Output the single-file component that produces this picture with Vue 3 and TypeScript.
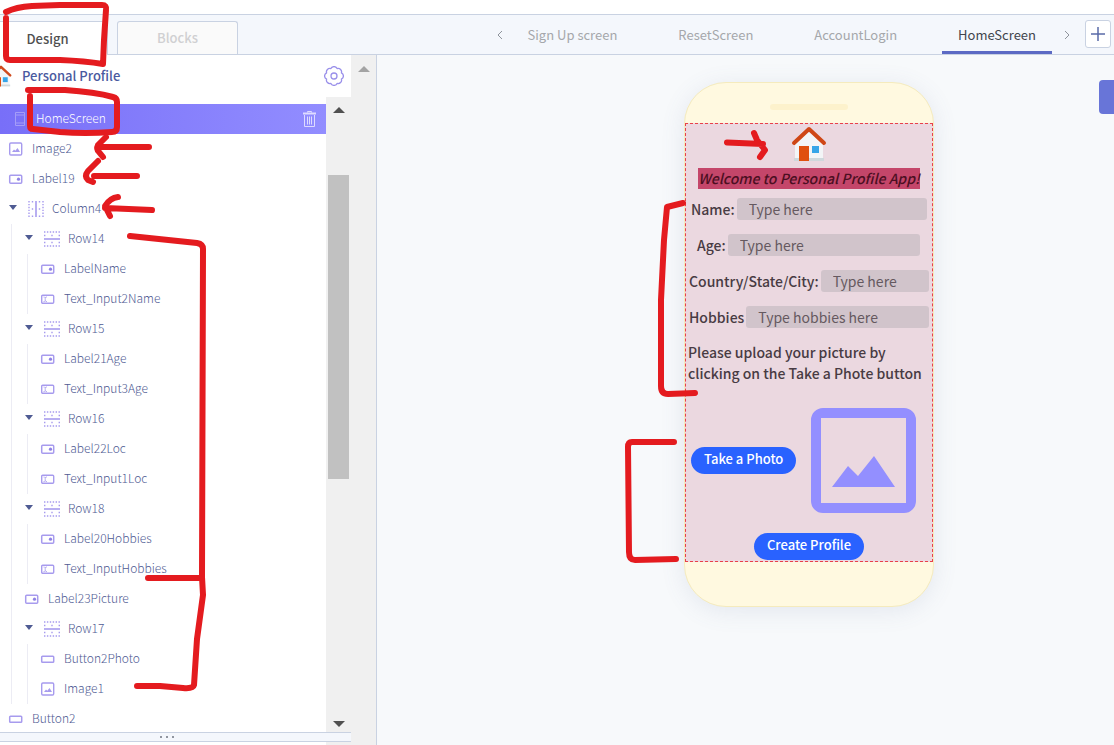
<script setup lang="ts">
import { ref } from 'vue'

type Kind = 'image' | 'label' | 'column' | 'row' | 'input' | 'button'

interface TreeNode {
  name: string
  kind: Kind
  depth: number
}

interface Field {
  id: string
  label: string
  hint: string
  inset: 'tight' | 'mid' | 'wide'
}

const nodes: TreeNode[] = [
  { name: 'Image2', kind: 'image', depth: 0 },
  { name: 'Label19', kind: 'label', depth: 0 },
  { name: 'Column4', kind: 'column', depth: 0 },
  { name: 'Row14', kind: 'row', depth: 1 },
  { name: 'LabelName', kind: 'label', depth: 2 },
  { name: 'Text_Input2Name', kind: 'input', depth: 2 },
  { name: 'Row15', kind: 'row', depth: 1 },
  { name: 'Label21Age', kind: 'label', depth: 2 },
  { name: 'Text_Input3Age', kind: 'input', depth: 2 },
  { name: 'Row16', kind: 'row', depth: 1 },
  { name: 'Label22Loc', kind: 'label', depth: 2 },
  { name: 'Text_Input1Loc', kind: 'input', depth: 2 },
  { name: 'Row18', kind: 'row', depth: 1 },
  { name: 'Label20Hobbies', kind: 'label', depth: 2 },
  { name: 'Text_InputHobbies', kind: 'input', depth: 2 },
  { name: 'Label23Picture', kind: 'label', depth: 1 },
  { name: 'Row17', kind: 'row', depth: 1 },
  { name: 'Button2Photo', kind: 'button', depth: 2 },
  { name: 'Image1', kind: 'image', depth: 2 },
  { name: 'Button2', kind: 'button', depth: 0 },
]

const screens = ['Sign Up screen', 'ResetScreen', 'AccountLogin', 'HomeScreen']
const current = ref('HomeScreen')

const fields: Field[] = [
  { id: 'name', label: 'Name:', hint: 'Type here', inset: 'mid' },
  { id: 'age', label: 'Age:', hint: 'Type here', inset: 'wide' },
  { id: 'place', label: 'Country/State/City:', hint: 'Type here', inset: 'tight' },
  { id: 'hobbies', label: 'Hobbies', hint: 'Type hobbies here', inset: 'tight' },
]

const isContainer = (kind: Kind) => kind === 'column' || kind === 'row'
</script>

<template>
  <div class="page">
    <header class="topbar">
      <div class="modes">
        <button class="mode on" type="button">Design</button>
        <button class="mode" type="button">Blocks</button>
      </div>
      <nav class="screens">
        <button class="chev" type="button" aria-label="Previous">
          <svg width="8" height="10" viewBox="0 0 8 10"><path d="M6 1 2 5l4 4" fill="none" stroke="#8f949c" /></svg>
        </button>
        <div class="tabs">
          <button
            v-for="s in screens"
            :key="s"
            type="button"
            class="tab"
            :class="{ on: s === current }"
            @click="current = s"
          >{{ s }}</button>
        </div>
        <button class="chev" type="button" aria-label="Next">
          <svg width="8" height="10" viewBox="0 0 8 10"><path d="m2 1 4 4-4 4" fill="none" stroke="#8f949c" /></svg>
        </button>
        <button class="plus" type="button" aria-label="Add screen">
          <svg width="14" height="14" viewBox="0 0 14 14"><path d="M7 0v14M0 7h14" stroke="#5a6ba8" stroke-width="1.5" /></svg>
        </button>
      </nav>
    </header>

    <div class="body">
      <aside class="side">
        <div class="panel">
          <div class="project">
            <svg class="home-small" viewBox="0 0 36 36">
              <path d="M4 16 18 4l14 12v18H4z" fill="#f3f5f7" />
              <path d="M3 32h30v3H3z" fill="#cfd8dc" />
              <path d="M8 20h10v15H8z" fill="#e0500f" />
              <path d="M21 20h8v8h-8z" fill="#36a5e8" />
              <path d="M3 17 18 3l15 14" fill="none" stroke="#cf4a1d" stroke-width="4" stroke-linecap="round" stroke-linejoin="round" />
            </svg>
            <span class="project-name">Personal Profile</span>
            <button class="gear" type="button" aria-label="Settings">
              <svg width="20" height="20" viewBox="0 0 20 20" fill="none" stroke="#9a90ea" stroke-width="1.3" stroke-linejoin="round">
                <path d="M6.900 2.600A3.400 3.400 0 0 1 13.100 2.600A3.400 3.400 0 0 1 17.400 6.900A3.400 3.400 0 0 1 17.400 13.100A3.400 3.400 0 0 1 13.100 17.400A3.400 3.400 0 0 1 6.900 17.400A3.400 3.400 0 0 1 2.600 13.100A3.400 3.400 0 0 1 2.600 6.900A3.400 3.400 0 0 1 6.900 2.600z" />
                <circle cx="10" cy="10" r="3" />
              </svg>
            </button>
          </div>

          <div class="tree-area">
            <ul class="tree">
              <li class="node selected">
                <svg class="phone-icon" width="10" height="14" viewBox="0 0 10 14" fill="none" stroke="#a59df8">
                  <path d="M.5.5h9v13h-9zM.5 3h9M.5 11h9" />
                </svg>
                <span>HomeScreen</span>
                <button class="trash" type="button" aria-label="Delete">
                  <svg width="13" height="16" viewBox="0 0 13 16" fill="none" stroke="#dedbff">
                    <path d="M4.500 1.500V.5h4v1M1.500 4v11.500h10V4M4.500 5.500v8M6.500 5.500v8M8.500 5.500v8" />
                    <path d="M0 2.500h13" stroke-width="2" />
                  </svg>
                </button>
              </li>
              <li v-for="n in nodes" :key="n.name" class="node" :class="'d' + n.depth">
                <svg v-if="isContainer(n.kind)" class="twist" width="8" height="5" viewBox="0 0 8 5">
                  <path d="M0 0h8L4 5z" fill="#4f5b93" />
                </svg>
                <svg class="icon" width="16" height="16" viewBox="0 0 16 16" fill="none" stroke="#a79bee">
                  <template v-if="n.kind === 'image'">
                    <rect x="1.700" y="2" width="12" height="12" rx="1.200" stroke-width="1.400" />
                    <path d="m4 11 2-2.500 1.300 1.200L9.500 7l2.500 4z" fill="#a79bee" stroke="none" />
                  </template>
                  <template v-else-if="n.kind === 'label'">
                    <rect x="1.700" y="4.200" width="12" height="8" rx="1" stroke-width="1.500" />
                    <circle cx="10.500" cy="8.200" r="1.600" fill="#8f82e4" stroke="none" />
                  </template>
                  <template v-else-if="n.kind === 'input'">
                    <rect x="1.700" y="4.200" width="12" height="8" rx="1" stroke-width="1.400" />
                    <path d="M3.500 6h1l.7.7L6 6h1M5.200 6.500v3.500M3.500 10.500h1l.7-.7.800.7h1" stroke-width=".8" />
                  </template>
                  <template v-else-if="n.kind === 'button'">
                    <rect x="1.700" y="5.200" width="12" height="6" rx=".8" stroke-width="1.500" />
                  </template>
                  <template v-else-if="n.kind === 'row'">
                    <path d="M0 1h16M0 15h16" stroke-width="1.400" stroke-dasharray="1.400 1.500" />
                    <path d="M0 4.500h16M0 11.500h16" stroke-width="1.400" stroke-dasharray="1.400 5.900" />
                    <path d="M0 8h16" stroke-width="1.600" />
                  </template>
                  <template v-else>
                    <path d="M1 0v16M15 0v16" stroke-width="1.400" stroke-dasharray="1.400 1.500" />
                    <path d="M4.500 0v16M11.500 0v16" stroke-width="1.400" stroke-dasharray="1.400 5.900" />
                    <path d="M8 0v16" stroke-width="1.600" />
                  </template>
                </svg>
                <span>{{ n.name }}</span>
              </li>
            </ul>
            <div class="scroll">
              <svg width="12" height="6" viewBox="0 0 12 6"><path d="M0 6h12L6 0z" fill="#505050" /></svg>
              <div class="thumb"></div>
              <svg width="12" height="6" viewBox="0 0 12 6"><path d="M0 0h12L6 6z" fill="#505050" /></svg>
            </div>
          </div>

          <div class="splitter"><i></i><i></i><i></i></div>
          <div class="below"><div class="below-scroll"></div></div>
        </div>
        <div class="outer-scroll">
          <svg width="12" height="6" viewBox="0 0 12 6"><path d="M0 6h12L6 0z" fill="#a3a3a3" /></svg>
        </div>
      </aside>

      <main class="canvas">
        <div class="phone">
          <div class="speaker"></div>
          <section class="screen">
            <svg class="home-big" viewBox="0 0 36 36">
              <path d="M4 16 18 4l14 12v18H4z" fill="#f3f5f7" />
              <path d="M3 32h30v3H3z" fill="#cfd8dc" />
              <path d="M8 20h10v15H8z" fill="#e0500f" />
              <path d="M21 20h7v7h-7z" fill="#36a5e8" />
              <path d="M3 17 18 3l15 14" fill="none" stroke="#cf4716" stroke-width="4" stroke-linecap="round" stroke-linejoin="round" />
            </svg>
            <h1 class="welcome">Welcome to Personal Profile App!</h1>
            <div v-for="f in fields" :key="f.id" class="field" :class="f.inset">
              <label :for="f.id">{{ f.label }}</label>
              <input :id="f.id" type="text" :placeholder="f.hint" />
            </div>
            <p class="note">Please upload your picture by clicking on the Take a Phote button</p>
            <div class="photo">
              <button class="pill" type="button">Take a Photo</button>
              <svg class="picture" viewBox="0 0 105 105">
                <rect x="5" y="5" width="95" height="95" rx="7" fill="none" stroke="#938fff" stroke-width="10" />
                <path d="M10 10h85v85H10z" fill="#ebd8e0" />
                <path d="m21 79 16-21 10 10 16-20 21 31z" fill="#938fff" />
              </svg>
            </div>
            <button class="pill create" type="button">Create Profile</button>
          </section>
        </div>
        <button class="drawer" type="button" aria-label="Open panel"></button>
      </main>
    </div>

    <svg class="marks" width="1114" height="745" viewBox="0 0 1114 745" aria-hidden="true">
      <path d="M6 12Q16 7 32 6L60 5L102 5Q107 5 106 10L104 40 103 64Q85 61 60 60L10 60Q6 60 6 56V18" />
      <path d="M28 90H65Q95 92 113 97Q117 98 117 102V127Q117 132 112 132Q85 134 60 132L33 129Q30 129 30 126V96" />
      <path d="M100 147H149M106 137 98 145Q96 149 99 152L103 157" />
      <path d="M94 176H137M98 161 88 171Q84 176 88 180L93 182" />
      <path d="M105 208 152 210M118 197Q110 198 105 206L110 216" />
      <path d="M130 236 197 243Q203 244 203 249L202 577 203 595 197 639 194 685Q193 689 183 688L160 686H137M148 578H202" />
      <path d="M727 142.500 763 144M754 133 757 140 765 150 760 157" />
      <path d="M683 203 667 207 664 240 661 300 661 386Q661 394 668 394L695 393" />
      <path d="M674 442H632Q628 442 628 447L629 552Q629 560 635 560L676 559" />
    </svg>
  </div>
</template>

<style>
body {
  margin: 0;
}
</style>

<style scoped>
.page {
  position: relative;
  display: flex;
  flex-direction: column;
  height: 100vh;
  box-sizing: border-box;
  padding-top: 14px;
  overflow: hidden;
  background: #fff;
  font-family: "Noto Sans CJK SC", "Noto Sans", sans-serif;
  font-size: 13px;
  line-height: 20px;
  color: #4f5b93;
}
button {
  margin: 0;
  padding: 0;
  border: 0;
  background: none;
  font: inherit;
  color: inherit;
}
svg {
  display: block;
  flex: none;
}
.topbar {
  display: flex;
  justify-content: space-between;
  height: 39px;
  flex: none;
  border-top: 1px solid #c9d2e2;
  border-bottom: 1px solid #c9d2e2;
  background: #f4f7fc;
}
.modes {
  display: flex;
  gap: 9px;
  margin-left: -13px;
  padding-top: 6px;
}
.mode {
  box-sizing: border-box;
  width: 121px;
  border: 1px solid #c9d2e2;
  border-bottom: 0;
  border-radius: 3px 3px 0 0;
  background: #fafafa;
  color: #d0d0d2;
  font-weight: 500;
}
.mode.on {
  margin-bottom: -1px;
  background: #fff;
  color: #505050;
}
.screens {
  display: flex;
  align-items: center;
  padding-right: 3px;
}
.tabs {
  display: flex;
  gap: 29px;
  height: 100%;
  margin: 0 11px 0 8px;
}
.tab {
  padding: 3px 16px 0;
  border-bottom: 3px solid transparent;
  color: #a5a7ab;
}
.tab.on {
  border-color: #5c6ac4;
  color: #40444c;
}
.plus {
  display: flex;
  align-items: center;
  justify-content: center;
  box-sizing: border-box;
  width: 26px;
  height: 28px;
  margin: 0 0 2px 14px;
  border: 1px solid #c9d2e2;
  border-radius: 3px;
  background: #fff;
}
.body {
  display: flex;
  flex: 1;
  min-height: 0;
}
.side {
  display: flex;
  width: 376px;
  flex: none;
  border-right: 1px solid #c9d2e2;
}
.panel {
  display: flex;
  flex: 1;
  flex-direction: column;
  min-width: 0;
}
.project {
  display: flex;
  align-items: center;
  height: 42px;
  flex: none;
  padding-right: 7px;
}
.home-small {
  width: 22px;
  margin-left: -10px;
}
.project-name {
  margin-left: 10px;
  font-weight: 500;
  color: #4a5aa0;
}
.gear {
  margin-left: auto;
}
.tree-area {
  display: flex;
  flex: 1;
  min-height: 0;
}
.tree {
  flex: 1;
  margin: 0;
  padding: 7px 0 0;
  list-style: none;
  font-size: 12px;
  font-weight: 300;
}
.node {
  display: flex;
  align-items: center;
  height: 30px;
  padding-left: 8px;
}
.node span {
  padding-bottom: 2px;
}
.d1 {
  padding-left: 24px;
  background: linear-gradient(#ececf4, #ececf4) 11px 0 / 1px 100% no-repeat;
}
.d2 {
  padding-left: 40px;
  background:
    linear-gradient(#ececf4, #ececf4) 11px 0 / 1px 100% no-repeat,
    linear-gradient(#ececf4, #ececf4) 27px 0 / 1px 100% no-repeat;
}
.selected {
  padding: 0 10px 0 15px;
  background: linear-gradient(90deg, #786ff8, #928dff);
  color: #fff;
}
.phone-icon {
  margin-right: 11px;
}
.trash {
  margin-left: auto;
}
.twist {
  margin: 0 11px 3px 1px;
}
.icon {
  margin-right: 8px;
}
.scroll {
  display: flex;
  flex-direction: column;
  align-items: center;
  box-sizing: border-box;
  width: 25px;
  padding: 10px 0 5px;
  background: #f0f0f0;
}
.thumb {
  width: 21px;
  height: 49%;
  margin: 62px 0 auto;
  background: #c1c1c1;
}
.splitter {
  display: flex;
  justify-content: center;
  align-items: center;
  gap: 4px;
  height: 8px;
  flex: none;
  border-top: 1px solid #c9d2e2;
  border-bottom: 1px solid #c9d2e2;
  background: #f4f7fc;
  padding-right: 18px;
}
.splitter i {
  width: 2px;
  height: 2px;
  border-radius: 1px;
  background: #6f7480;
}
.below {
  display: flex;
  justify-content: flex-end;
  height: 3px;
}
.below-scroll {
  width: 25px;
  background: #f0f0f0;
}
.outer-scroll {
  display: flex;
  justify-content: center;
  width: 25px;
  padding-top: 11px;
  background: #f0f0f0;
}
.canvas {
  position: relative;
  display: flex;
  flex: 1;
  justify-content: center;
  align-items: flex-start;
  padding: 27px 0 0 127px;
  background: #f7f9fb;
}
.phone {
  box-sizing: border-box;
  width: 250px;
  padding-bottom: 44px;
  border: 1px solid #f5ebbd;
  border-radius: 42px;
  background: #fff9e0;
  box-shadow: 0 4px 24px rgba(90, 110, 150, 0.12);
}
.speaker {
  width: 78px;
  height: 6px;
  margin: 21px auto 13px;
  border-radius: 3px;
  background: #fdf2cc;
}
.screen {
  display: flex;
  flex-direction: column;
  align-items: center;
  border: 1px dashed #e8404a;
  background: #ebd8e0;
  color: #54474f;
}
.home-big {
  width: 36px;
  margin-top: 2px;
}
.welcome {
  margin: 6px 0 9px;
  background: #c4466a;
  color: #4c0f22;
  font-size: 14px;
  line-height: 21px;
  font-style: italic;
  font-weight: 500;
  white-space: nowrap;
}
.field {
  display: flex;
  align-items: center;
  gap: 2px;
  align-self: stretch;
  height: 22px;
  margin-bottom: 14px;
  font-size: 14px;
}
.tight {
  padding: 0 3px;
}
.mid {
  padding: 0 5px;
}
.wide {
  padding: 0 12px 0 11px;
}
.field label {
  padding-bottom: 1px;
  color: #483b43;
  font-weight: 500;
  white-space: nowrap;
}
.field input {
  flex: 1;
  min-width: 0;
  height: 22px;
  box-sizing: border-box;
  padding: 0 12px 1px;
  border: 0;
  border-radius: 3px;
  background: #d1c4cb;
  font: inherit;
  color: inherit;
}
.field input::placeholder {
  color: #65595f;
  opacity: 1;
}
.note {
  align-self: stretch;
  margin: 0 0 24px;
  padding: 0 2px;
  color: #483b43;
  font-size: 14px;
  line-height: 21px;
  font-weight: 500;
}
.photo {
  display: flex;
  align-items: center;
  align-self: stretch;
  justify-content: space-between;
  padding: 0 16px 0 5px;
}
.picture {
  width: 105px;
}
.pill {
  height: 27px;
  padding: 0 13px 3px;
  border-radius: 14px;
  background: #2962ff;
  color: #fff;
  font-weight: 500;
  white-space: nowrap;
}
.create {
  margin-top: 20px;
  margin-bottom: 1px;
}
.drawer {
  position: absolute;
  top: 25px;
  right: 0;
  width: 15px;
  height: 34px;
  border-radius: 4px 0 0 4px;
  background: #6875d8;
}
.marks {
  position: absolute;
  top: 0;
  left: 0;
  pointer-events: none;
  fill: none;
  stroke: #e41b1f;
  stroke-width: 6;
  stroke-linecap: round;
  stroke-linejoin: round;
}
</style>
